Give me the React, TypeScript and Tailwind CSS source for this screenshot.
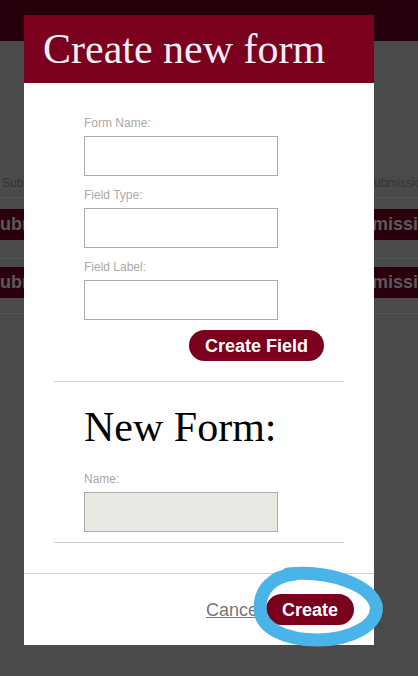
export default function App() {
  return (
    <div className="relative w-[418px] h-[676px] overflow-hidden bg-[#4a4a4a] font-['Liberation_Sans',Arial,sans-serif]">
      {/* page behind the overlay */}
      <div className="h-[41px] bg-[#26000a]" />
      <div className="mt-[135px] grid grid-cols-[366px_1fr] h-[14px] text-[12px] leading-[14px] text-[#353535] whitespace-nowrap">
        <span className="pl-[2px]">Submissions</span>
        <span>Submissions</span>
      </div>
      <div className="mt-[7px] h-px bg-[#545454]" />
      <div className="mt-[11px] h-[31px] bg-[#2b000d] grid grid-cols-[338px_1fr] items-center text-[18px] font-bold text-[#5a5a5a] whitespace-nowrap">
        <span className="-ml-[12px]">Submissions</span>
        <span>Submissions</span>
      </div>
      <div className="mt-[18px] h-px bg-[#545454]" />
      <div className="mt-[8px] h-[31px] bg-[#2b000d] grid grid-cols-[338px_1fr] items-center text-[18px] font-bold text-[#5a5a5a] whitespace-nowrap">
        <span className="-ml-[12px]">Submissions</span>
        <span>Submissions</span>
      </div>
      <div className="mt-[15px] h-px bg-[#545454]" />

      {/* modal */}
      <div className="absolute left-[24px] top-[15px] w-[350px] bg-white">
        <div className="h-[68px] bg-[#7a001e] flex items-center pl-[19px]">
          <h1 className="font-['Liberation_Serif','Times_New_Roman',serif] text-[42px] leading-none text-[#efeef7]">
            Create new form
          </h1>
        </div>

        <div className="px-[30px] pt-[33px] pb-[30px]">
          <div className="pl-[30px]">
            <label className="block text-[12px] leading-[14px] text-[#a9a9a9] mb-[6px]">Form Name:</label>
            <input className="block w-[194px] h-[40px] border border-[#ababab] bg-white outline-none" />
            <label className="block mt-[12px] text-[12px] leading-[14px] text-[#a9a9a9] mb-[6px]">Field Type:</label>
            <input className="block w-[194px] h-[40px] border border-[#ababab] bg-white outline-none" />
            <label className="block mt-[12px] text-[12px] leading-[14px] text-[#a9a9a9] mb-[6px]">Field Label:</label>
            <input className="block w-[194px] h-[40px] border border-[#ababab] bg-white outline-none" />
          </div>
          <div className="mt-[10px] flex justify-end pr-[20px]">
            <button className="h-[31px] px-[16px] rounded-full bg-[#7a001e] text-white text-[18px] font-bold leading-none">
              Create Field
            </button>
          </div>

          <div className="mt-[20px] h-px bg-[#cfcfcf]" />

          <div className="pl-[30px]">
            <h2 className="mt-[24px] font-['Liberation_Serif','Times_New_Roman',serif] text-[42px] leading-none text-black">
              New Form:
            </h2>
            <label className="block mt-[24px] text-[12px] leading-[14px] text-[#a9a9a9] mb-[6px]">Name:</label>
            <div className="w-[194px] h-[40px] border border-[#ababab] bg-[#e9e9e4]" />
          </div>

          <div className="mt-[10px] h-px bg-[#cfcfcf]" />
        </div>

        <div className="border-t border-[#d0d0d0] p-[20px] flex justify-end items-center gap-[4px]">
          <a className="text-[18px] leading-none text-[#777777] underline">Cancel</a>
          <button className="h-[31px] px-[16px] rounded-full bg-[#7a001e] text-white text-[18px] font-bold leading-none">
            Create
          </button>
        </div>
      </div>

      {/* hand-drawn highlight */}
      <svg className="absolute inset-0 pointer-events-none" width="418" height="676" viewBox="0 0 418 676">
        <path
          d="M 288 574 C 330 570, 370 585, 376 605 C 380 625, 350 640, 318 640 C 285 640, 260 628, 260 608 C 260 590, 272 576, 295 574"
          fill="none"
          stroke="#4ab4e8"
          strokeWidth="13"
          strokeLinecap="round"
        />
      </svg>
    </div>
  );
}
